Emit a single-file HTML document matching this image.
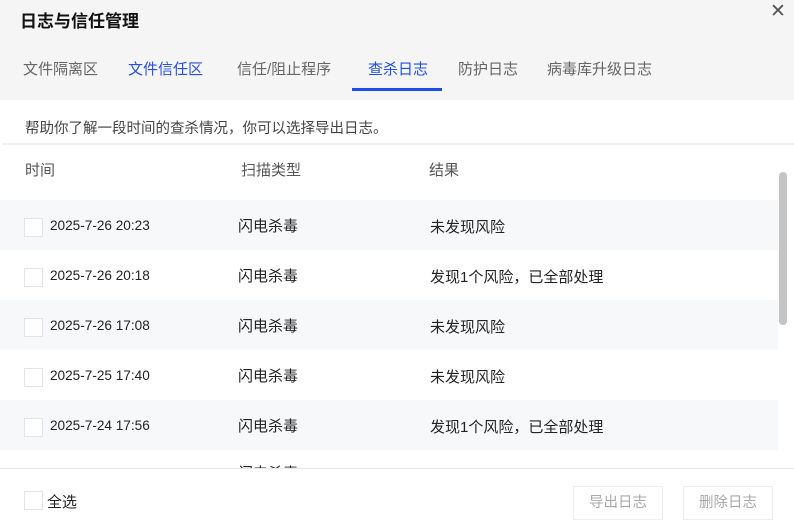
<!DOCTYPE html>
<html><head><meta charset="utf-8"><style>
*{margin:0;padding:0;box-sizing:border-box}
body{width:794px;height:525px;overflow:hidden;background:#fff;font-family:"Liberation Sans","Noto Sans CJK SC",sans-serif;color:#222;position:relative}
.hdr{position:absolute;left:0;top:0;width:794px;height:100px;background:#f5f5f5}
.title{position:absolute;left:20px;top:7px;font-size:17px;font-weight:bold;color:#111}
.close{position:absolute;left:770px;top:0px;font-size:19px;color:#555;font-weight:300}
.tab{position:absolute;top:58px;font-size:15px;color:#666}
.ul{position:absolute;left:352px;top:88px;width:90px;height:3px;background:#1f4fe0}
.desc{position:absolute;left:25px;top:117px;font-size:14.5px;color:#444}
.sep{position:absolute;left:2px;top:143px;width:792px;height:2px;background:#f0f0f0}
.th{position:absolute;top:159px;font-size:15px;color:#555}
.row{position:absolute;left:0;width:778px;height:50px}
.g{background:#f7f8fa}
.cb{position:absolute;left:24px;width:19px;height:19px;background:#fff;border:1px solid #e4e4e4}
.t{position:absolute;font-size:15px;color:#222}
.d{font-size:13.6px}
.sb{position:absolute;left:779px;top:172px;width:8px;height:153px;background:#c4c4c4;border-radius:4px}
.foot{position:absolute;left:0;top:468px;width:794px;height:57px;background:#fff;border-top:1px solid #e8e8e8}
.btn{position:absolute;top:486px;height:34px;border:1px solid #eee;font-size:14.5px;color:#aaa;text-align:center;line-height:32px;background:#fff}
</style></head><body>
<div class="hdr"></div>
<div class="title">日志与信任管理</div>
<div class="close">✕</div>
<div class="tab" style="left:23px">文件隔离区</div>
<div class="tab" style="left:128px;color:#2950d8">文件信任区</div>
<div class="tab" style="left:237px">信任/阻止程序</div>
<div class="tab" style="left:368px;color:#1f4fe0">查杀日志</div>
<div class="tab" style="left:458px">防护日志</div>
<div class="tab" style="left:547px">病毒库升级日志</div>
<div class="ul"></div>
<div class="desc">帮助你了解一段时间的查杀情况，你可以选择导出日志。</div>
<div class="sep"></div>
<div class="th" style="left:25px">时间</div>
<div class="th" style="left:241px">扫描类型</div>
<div class="th" style="left:429px">结果</div>

<div class="row g" style="top:200px"></div>
<div class="row" style="top:250px"></div>
<div class="row g" style="top:300px"></div>
<div class="row" style="top:350px"></div>
<div class="row g" style="top:400px"></div>

<div class="cb" style="top:218px"></div><div class="t d" style="left:50px;top:218px">2025-7-26 20:23</div><div class="t" style="left:238px;top:215px">闪电杀毒</div><div class="t" style="left:430px;top:216px">未发现风险</div>
<div class="cb" style="top:268px"></div><div class="t d" style="left:50px;top:268px">2025-7-26 20:18</div><div class="t" style="left:238px;top:265px">闪电杀毒</div><div class="t" style="left:430px;top:266px">发现1个风险，已全部处理</div>
<div class="cb" style="top:318px"></div><div class="t d" style="left:50px;top:318px">2025-7-26 17:08</div><div class="t" style="left:238px;top:315px">闪电杀毒</div><div class="t" style="left:430px;top:316px">未发现风险</div>
<div class="cb" style="top:368px"></div><div class="t d" style="left:50px;top:368px">2025-7-25 17:40</div><div class="t" style="left:238px;top:365px">闪电杀毒</div><div class="t" style="left:430px;top:366px">未发现风险</div>
<div class="cb" style="top:418px"></div><div class="t d" style="left:50px;top:418px">2025-7-24 17:56</div><div class="t" style="left:238px;top:415px">闪电杀毒</div><div class="t" style="left:430px;top:416px">发现1个风险，已全部处理</div>
<div class="t" style="left:238px;top:462px">闪电杀毒</div>
<div class="sb"></div>
<div class="foot"></div>
<div class="cb" style="top:491px"></div>
<div class="t" style="left:47px;top:491px">全选</div>
<div class="btn" style="left:573px;width:90px">导出日志</div>
<div class="btn" style="left:683px;width:90px">删除日志</div>
</body></html>
